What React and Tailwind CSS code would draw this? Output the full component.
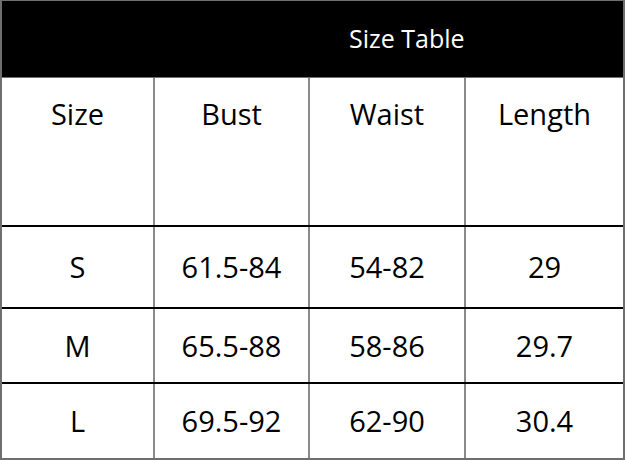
import React from 'react';

const cols = ['Size', 'Bust', 'Waist', 'Length'];
const rows = [
    { h: 'h-[82px]', cells: ['S', '61.5-84', '54-82', '29'] },
    { h: 'h-[75px]', cells: ['M', '65.5-88', '58-86', '29.7'] },
    { h: 'h-[75px]', cells: ['L', '69.5-92', '62-90', '30.4'] },
];

export default function App() {
    return (
        <div className="w-[625px] h-[460px] bg-white border-t border-l-2 border-r-2 border-b-2 border-[#6f6f6f] flex flex-col text-black" style={{ fontFamily: '"Open Sans", "Noto Sans", sans-serif' }}>
            {/* Title bar */}
            <div className="h-[76px] bg-black text-white flex items-center pl-[347px] text-[25px]">
                Size Table
            </div>

            {/* Column headers */}
            <div className="grid grid-cols-[153px_155px_156px_1fr] h-[150px] border-t border-b-2 border-b-black border-t-[#6f6f6f]">
                {cols.map((c, i) => (
                    <div
                        key={c}
                        className={`flex justify-center pt-[14px] text-[29px] ${i < 3 ? 'border-r-2 border-[#8a8a8a]' : ''}`}
                    >
                        {c}
                    </div>
                ))}
            </div>

            {/* Data rows */}
            {rows.map((r, ri) => (
                <div
                    key={r.cells[0]}
                    className={`grid grid-cols-[153px_155px_156px_1fr] ${r.h} ${ri < rows.length - 1 ? 'border-b-2 border-black' : 'flex-1'}`}
                >
                    {r.cells.map((c, i) => (
                        <div
                            key={i}
                            className={`flex items-center justify-center text-[29px] ${i < 3 ? 'border-r-2 border-[#8a8a8a]' : ''}`}
                        >
                            {c}
                        </div>
                    ))}
                </div>
            ))}
        </div>
    );
}
